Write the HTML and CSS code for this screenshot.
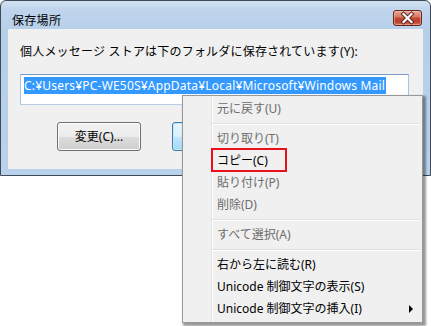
FILE: index.html
```html
<!DOCTYPE html>
<html lang="ja">
<head>
<meta charset="utf-8">
<title>保存場所</title>
<link rel="stylesheet" href="styles.css">
</head>
<body>
<div class="window">
  <div class="titlebar">
    <span class="title">保存場所</span>
    <span class="close">
      <svg width="27" height="14" viewBox="0 0 27 14">
        <path d="M9.5 3 L17.5 11 M17.5 3 L9.5 11" stroke="#5a2018" stroke-width="4" stroke-linecap="square" fill="none"/>
        <path d="M9.5 3 L17.5 11 M17.5 3 L9.5 11" stroke="#ffffff" stroke-width="2.2" stroke-linecap="square" fill="none"/>
      </svg>
    </span>
  </div>
  <div class="client">
    <p class="label">個人メッセージ ストアは下のフォルダに保存されています(Y):</p>
    <div class="textbox"><span class="sel">C:¥Users¥PC-WE50S¥AppData¥Local¥Microsoft¥Windows Mail</span></div>
    <div class="buttons">
      <span class="btn">変更(C)...</span>
      <span class="btn default"></span>
    </div>
  </div>
</div>

<div class="menu">
  <div class="item disabled">元に戻す(U)</div>
  <div class="sep"></div>
  <div class="item disabled">切り取り(T)</div>
  <div class="item">コピー(C)</div>
  <div class="item disabled">貼り付け(P)</div>
  <div class="item disabled">削除(D)</div>
  <div class="sep"></div>
  <div class="item disabled">すべて選択(A)</div>
  <div class="sep"></div>
  <div class="item">右から左に読む(R)</div>
  <div class="item">Unicode 制御文字の表示(S)</div>
  <div class="item">Unicode 制御文字の挿入(I)<span class="arrow"></span></div>
  <div class="mark"></div>
</div>
</body>
</html>
```

FILE: styles.css
```css
* { box-sizing: border-box; }

html, body {
  margin: 0;
  padding: 0;
  background: #ffffff;
  width: 431px;
  height: 326px;
  overflow: hidden;
  font-family: "Noto Sans", "Noto Sans CJK JP", sans-serif;
  font-size: 12px;
  color: #000;
}

.window {
  width: 431px;
  height: 176px;
  border: 1px solid #3e4a57;
  border-radius: 6px 6px 0 0;
  background: linear-gradient(#d3e2f2 0px, #c0d5ec 8px, #b6cfe9 30px, #b9d1ea 100%);
  padding: 0 7px 6px 7px;
  display: flex;
  flex-direction: column;
}

.titlebar {
  height: 28px;
  display: flex;
  align-items: flex-start;
  justify-content: space-between;
  margin: 0 -7px;
  padding: 0 8px 0 11px;
}

.title {
  margin-top: 12px;
  line-height: 16px;
  font-size: 12px;
  letter-spacing: 0.3px;
}

.close {
  margin-top: 9px;
  width: 29px;
  height: 16px;
  border: 1px solid #6b2417;
  border-radius: 3px;
  background: linear-gradient(#e6a899 0%, #d77a66 40%, #c24b36 50%, #b9402c 75%, #cf6d57 100%);
  box-shadow: inset 0 0 0 1px rgba(255, 210, 200, 0.45);
  display: flex;
  align-items: center;
  justify-content: center;
}

.client {
  flex: 1;
  background: #f0f0f0;
  padding: 15px 0 0 12px;
}

.label {
  margin: 0;
  line-height: 16px;
  letter-spacing: 0.2px;
}

.textbox {
  margin-top: 14px;
  width: 389px;
  height: 31px;
  border: 1px solid #8fb0d6;
  border-color: #7a9cc8 #a9c3e2 #b7cde6 #a9c3e2;
  background: #fff;
  padding: 3px 0 0 3px;
  line-height: 15px;
  letter-spacing: 0.2px;
}

.sel {
  background: #3399ff;
  color: #fff;
  padding: 0 1px 0 0;
}

.buttons {
  margin-top: 17px;
  padding-left: 37px;
  display: flex;
  gap: 31px;
}

.btn {
  width: 84px;
  height: 29px;
  border: 1px solid #707070;
  border-radius: 3px;
  background: linear-gradient(#f2f2f2 0%, #ebebeb 50%, #dddddd 51%, #cfcfcf 100%);
  box-shadow: inset 0 0 0 1px #fbfbfb;
  display: flex;
  align-items: center;
  justify-content: center;
  line-height: 16px;
}

.btn.default {
  border-color: #3c7fb1;
  background: linear-gradient(#eaf6fd 0%, #d9f0fc 50%, #bee6fd 51%, #a7d9f5 100%);
  box-shadow: inset 0 0 0 1px #c4e5f6;
}

.menu {
  position: absolute;
  left: 182px;
  top: 95px;
  width: 241px;
  border: 1px solid #979797;
  padding: 2px;
  background:
    linear-gradient(to right, transparent 28px, #e2e3e3 28px, #e2e3e3 29px, #ffffff 29px, #ffffff 30px, transparent 30px),
    #f0f0f0;
  box-shadow: 2px 2px 2px 1px rgba(0, 0, 0, 0.4);
}

.item {
  height: 22px;
  padding: 0 7px 0 32px;
  display: flex;
  align-items: center;
  line-height: 16px;
  white-space: nowrap;
}

.item.disabled {
  color: #6d6d6d;
}

.sep {
  height: 8px;
  padding-top: 3px;
}

.sep::after {
  content: "";
  display: block;
  margin-left: 27px;
  border-top: 1px solid #e0e0e0;
  border-bottom: 1px solid #ffffff;
}

.arrow {
  margin-left: auto;
  width: 0;
  height: 0;
  border-left: 4px solid #000;
  border-top: 4px solid transparent;
  border-bottom: 4px solid transparent;
}

.mark {
  position: absolute;
  left: 28px;
  top: 52px;
  width: 76px;
  height: 24px;
  border: 2px solid #e8101a;
}
```
